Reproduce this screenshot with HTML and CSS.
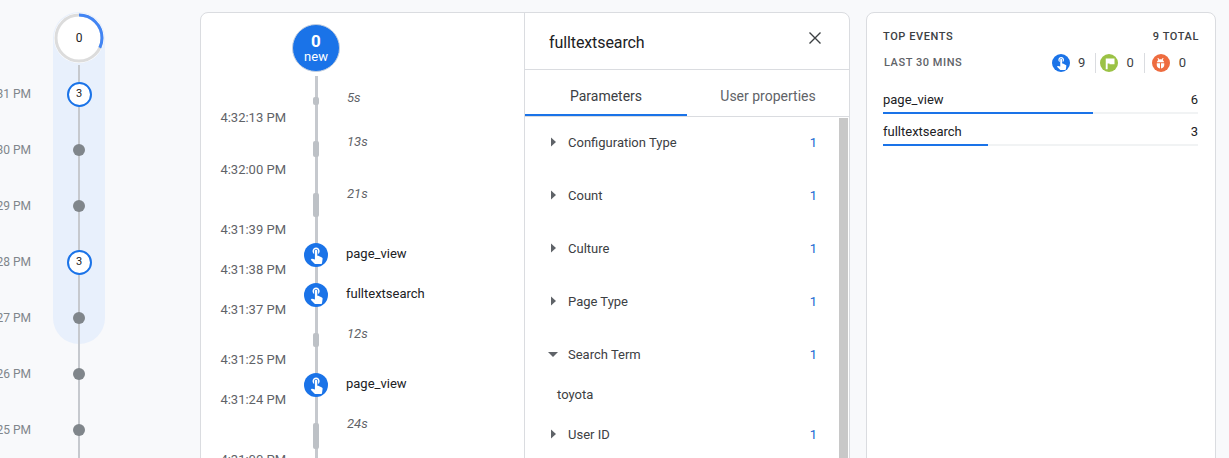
FILE: index.html
```html
<!DOCTYPE html>
<html lang="en">
<head>
    <meta charset="UTF-8">
    <meta name="viewport" content="width=device-width, initial-scale=1.0">
    <title>DebugView</title>
    <link rel="stylesheet" href="styles.css">
</head>
<body>
    <svg class="defs" width="0" height="0">
        <symbol id="touch" viewBox="0 0 24 24"><path d="M9 11.24V7.5C9 6.12 10.12 5 11.5 5S14 6.12 14 7.5v3.74c1.21-.81 2-2.18 2-3.74C16 5.01 13.99 3 11.5 3S7 5.01 7 7.5c0 1.56.79 2.93 2 3.74zm9.84 4.63l-4.54-2.26c-.17-.07-.35-.11-.54-.11H13v-6c0-.83-.67-1.5-1.5-1.5S10 6.67 10 7.5v10.74l-3.43-.72c-.08-.01-.15-.03-.24-.03-.31 0-.59.13-.79.33l-.79.8 4.94 4.94c.27.27.65.44 1.06.44h6.79c.75 0 1.33-.55 1.44-1.28l.75-5.27c.01-.07.02-.14.02-.2 0-.62-.38-1.16-.91-1.38z"/></symbol>
        <symbol id="flag" viewBox="0 0 24 24"><path d="M6 4h14v9h-8v-1h-3v9H6z"/></symbol>
        <symbol id="bug" viewBox="0 0 24 24"><path d="M7 3.5L8.4 3l1.9 2.400c1.100-.4 2.300-.4 3.400 0L15.600 3l1.400.5-1.500 3c1.200.8 2 1.900 2.300 3.500H6.200c.3-1.600 1.100-2.700 2.300-3.500zM6 11.500h5.200V20C8 19.600 6 17.500 6 14.500zM12.800 11.500H18v3c0 3-2 5.100-5.200 5.500z"/></symbol>
        <symbol id="arrow-right" viewBox="0 0 10 10"><path d="M3 .5L8 5 3 9.500z"/></symbol>
        <symbol id="arrow-down" viewBox="0 0 10 10"><path d="M0 3h10L5 8z"/></symbol>
    </svg>

    <div class="page">
        <div class="minutes">
            <div class="minutes-band"></div>
            <div class="minutes-rail"></div>
            <div class="ring">
                <svg class="ring-arc" viewBox="0 0 50 50">
                    <circle class="ring-track" cx="25" cy="25" r="23"/>
                    <circle class="ring-progress" cx="25" cy="25" r="23" pathLength="100" stroke-dasharray="32 68"/>
                </svg>
                <span>0</span>
            </div>
            <div class="minute"><span class="minute-time">4:31 PM</span><span class="minute-mark"><span class="badge">3</span></span></div>
            <div class="minute"><span class="minute-time">4:30 PM</span><span class="minute-mark"><span class="dot"></span></span></div>
            <div class="minute"><span class="minute-time">4:29 PM</span><span class="minute-mark"><span class="dot"></span></span></div>
            <div class="minute"><span class="minute-time">4:28 PM</span><span class="minute-mark"><span class="badge">3</span></span></div>
            <div class="minute"><span class="minute-time">4:27 PM</span><span class="minute-mark"><span class="dot"></span></span></div>
            <div class="minute"><span class="minute-time">4:26 PM</span><span class="minute-mark"><span class="dot"></span></span></div>
            <div class="minute"><span class="minute-time">4:25 PM</span><span class="minute-mark"><span class="dot"></span></span></div>
        </div>

        <div class="card stream">
            <div class="timeline">
                <div class="new-count"><b>0</b><span>new</span></div>
                <div class="events">
                    <div class="event gap-row row-44">
                        <span class="event-time">4:32:13 PM</span>
                        <span class="event-mark"><i class="pill pill-5"></i></span>
                        <span class="gap-label">5s</span>
                    </div>
                    <div class="event gap-row row-52">
                        <span class="event-time">4:32:00 PM</span>
                        <span class="event-mark"><i class="pill pill-13"></i></span>
                        <span class="gap-label">13s</span>
                    </div>
                    <div class="event gap-row row-60">
                        <span class="event-time">4:31:39 PM</span>
                        <span class="event-mark"><i class="pill pill-21"></i></span>
                        <span class="gap-label">21s</span>
                    </div>
                    <div class="event row-40">
                        <span class="event-time">4:31:38 PM</span>
                        <span class="event-mark"><span class="event-icon"><svg><use href="#touch"/></svg></span></span>
                        <span class="event-name">page_view</span>
                    </div>
                    <div class="event row-40">
                        <span class="event-time">4:31:37 PM</span>
                        <span class="event-mark"><span class="event-icon"><svg><use href="#touch"/></svg></span></span>
                        <span class="event-name">fulltextsearch</span>
                    </div>
                    <div class="event gap-row row-50">
                        <span class="event-time">4:31:25 PM</span>
                        <span class="event-mark"><i class="pill pill-12"></i></span>
                        <span class="gap-label">12s</span>
                    </div>
                    <div class="event row-40">
                        <span class="event-time">4:31:24 PM</span>
                        <span class="event-mark"><span class="event-icon"><svg><use href="#touch"/></svg></span></span>
                        <span class="event-name">page_view</span>
                    </div>
                    <div class="event gap-row row-60">
                        <span class="event-time">4:31:00 PM</span>
                        <span class="event-mark"><i class="pill pill-24"></i></span>
                        <span class="gap-label">24s</span>
                    </div>
                </div>
            </div>

            <div class="details">
                <div class="details-head">
                    <span class="details-title">fulltextsearch</span>
                    <svg class="close" viewBox="0 0 14 14"><path d="M1.500 1.500l11 11M12.500 1.500l-11 11"/></svg>
                </div>
                <div class="tabs">
                    <div class="tab active">Parameters</div>
                    <div class="tab">User properties</div>
                </div>
                <div class="params-wrap">
                    <div class="params">
                        <div class="param"><svg class="caret"><use href="#arrow-right"/></svg><span class="param-name">Configuration Type</span><span class="param-count">1</span></div>
                        <div class="param"><svg class="caret"><use href="#arrow-right"/></svg><span class="param-name">Count</span><span class="param-count">1</span></div>
                        <div class="param"><svg class="caret"><use href="#arrow-right"/></svg><span class="param-name">Culture</span><span class="param-count">1</span></div>
                        <div class="param"><svg class="caret"><use href="#arrow-right"/></svg><span class="param-name">Page Type</span><span class="param-count">1</span></div>
                        <div class="param open"><svg class="caret"><use href="#arrow-down"/></svg><span class="param-name">Search Term</span><span class="param-count">1</span></div>
                        <div class="param-value">toyota</div>
                        <div class="param"><svg class="caret"><use href="#arrow-right"/></svg><span class="param-name">User ID</span><span class="param-count">1</span></div>
                    </div>
                    <div class="scroll-thumb"></div>
                </div>
            </div>
        </div>

        <div class="card top-events">
            <div class="top-head">
                <span>TOP EVENTS</span>
                <span>9 TOTAL</span>
            </div>
            <div class="top-sub">
                <span class="top-range">LAST 30 MINS</span>
                <div class="tallies">
                    <div class="tally"><span class="tally-icon blue"><svg><use href="#touch"/></svg></span><span>9</span></div>
                    <div class="tally"><span class="tally-icon green"><svg><use href="#flag"/></svg></span><span>0</span></div>
                    <div class="tally"><span class="tally-icon orange"><svg><use href="#bug"/></svg></span><span>0</span></div>
                </div>
            </div>
            <div class="bar-row">
                <div class="bar-text"><span>page_view</span><span>6</span></div>
                <div class="bar-track"><div class="bar-fill" style="width: 66.667%"></div></div>
            </div>
            <div class="bar-row">
                <div class="bar-text"><span>fulltextsearch</span><span>3</span></div>
                <div class="bar-track"><div class="bar-fill" style="width: 33.333%"></div></div>
            </div>
        </div>
    </div>
</body>
</html>
```

FILE: styles.css
```css
html, body {
    height: 100%;
    margin: 0;
    overflow: hidden;
}
body {
    font-family: Roboto, "Liberation Sans", sans-serif;
    font-size: 13px;
    line-height: 16px;
    background-color: #f8f9fb;
    color: #202124;
}
.defs {
    position: absolute;
}
.page {
    display: flex;
    align-items: flex-start;
    gap: 16px;
    height: 458px;
    overflow: hidden;
}

/* minutes column */
.minutes {
    position: relative;
    flex: none;
    width: 184px;
    height: 640px;
    padding-top: 13px;
    box-sizing: border-box;
}
.minutes-band {
    position: absolute;
    left: 53px;
    top: 12px;
    width: 52px;
    height: 332px;
    border-radius: 26px;
    background-color: #e8f0fc;
}
.minutes-rail {
    position: absolute;
    left: 78px;
    top: 65px;
    bottom: 0;
    width: 2px;
    background-color: #c6c9ce;
}
.ring {
    position: relative;
    width: 50px;
    height: 50px;
    margin: 0 0 3px 54px;
    display: flex;
    align-items: center;
    justify-content: center;
    border-radius: 50%;
    background-color: #fff;
    font-size: 12px;
}
.ring-arc {
    position: absolute;
    inset: 0;
    transform: rotate(-90deg);
}
.ring-track,
.ring-progress {
    fill: none;
    stroke-width: 3px;
}
.ring-track {
    stroke: #dcdcdc;
}
.ring-progress {
    stroke: #4285f4;
}
.minute {
    display: flex;
    align-items: center;
    height: 56px;
}
.minute-time {
    display: flex;
    justify-content: flex-end;
    flex: none;
    width: 31px;
    overflow: hidden;
    white-space: nowrap;
    font-size: 12px;
    color: #80868b;
}
.minute-mark {
    display: flex;
    justify-content: center;
    flex: none;
    width: 96px;
}
.dot {
    position: relative;
    width: 12px;
    height: 12px;
    border-radius: 50%;
    background-color: #80868b;
}
.badge {
    position: relative;
    display: flex;
    align-items: center;
    justify-content: center;
    width: 25px;
    height: 25px;
    box-sizing: border-box;
    border: 2px solid #1a73e8;
    border-radius: 50%;
    background-color: #fff;
    font-size: 11px;
}

/* cards */
.card {
    flex: none;
    box-sizing: border-box;
    height: 640px;
    margin-top: 12px;
    border: 1px solid #dadce0;
    border-radius: 8px;
    background-color: #fff;
}
.stream {
    display: flex;
    width: 650px;
}

/* event timeline */
.timeline {
    flex: none;
    box-sizing: border-box;
    width: 324px;
    padding-top: 11px;
    border-right: 1px solid #dadce0;
}
.new-count {
    display: flex;
    flex-direction: column;
    align-items: center;
    justify-content: center;
    box-sizing: border-box;
    width: 48px;
    height: 48px;
    margin: 0 0 10px 91px;
    border: 1px solid #c3cfe0;
    border-radius: 50%;
    background-color: #1a73e8;
    color: #fff;
    font-size: 13px;
    line-height: 14px;
}
.new-count b {
    font-size: 17px;
    font-weight: 700;
    line-height: 18px;
}
.events {
    position: relative;
}
.events::before {
    content: "";
    position: absolute;
    left: 114px;
    top: -6px;
    bottom: 0;
    width: 3px;
    background-color: #c6c9ce;
}
.event {
    position: relative;
    display: grid;
    grid-template-columns: 85px 24px 1fr;
    column-gap: 18px;
}
.row-40 { height: 40px; }
.row-44 { height: 44px; }
.row-50 { height: 50px; }
.row-52 { height: 52px; }
.row-60 { height: 60px; }
.event-time {
    grid-column: 1;
    align-self: end;
    text-align: right;
    color: #5f6368;
}
.event-mark {
    grid-column: 2;
    display: flex;
    justify-content: center;
    padding-top: 5px;
}
.gap-row .event-mark {
    padding-top: 15px;
}
.event-name,
.gap-label {
    grid-column: 3;
    padding-top: 8px;
}
.gap-label {
    font-style: italic;
    color: #5f6368;
    margin-left: 1px;
}
.pill {
    display: block;
    width: 6px;
    border-radius: 2px;
    background-color: #bdc1c6;
}
.pill-5 { height: 8px; }
.pill-12 { height: 14px; }
.pill-13 { height: 16px; }
.pill-21 { height: 24px; }
.pill-24 { height: 26px; }
.event-icon {
    display: flex;
    align-items: center;
    justify-content: center;
    width: 24px;
    height: 24px;
    border-radius: 50%;
    background-color: #1a73e8;
}
.event-icon svg {
    width: 19px;
    height: 19px;
    margin-bottom: 2px;
    fill: #fff;
}

/* event details */
.details {
    flex: 1;
    min-width: 0;
}
.details-head {
    display: flex;
    align-items: center;
    justify-content: space-between;
    height: 56px;
    padding: 0 27px 0 24px;
    border-bottom: 1px solid #dadce0;
}
.details-title {
    font-size: 16px;
    letter-spacing: -0.1px;
    margin-top: 4px;
}
.close {
    width: 14px;
    height: 14px;
    margin-top: -6px;
    fill: none;
    stroke: #3c4043;
    stroke-width: 1.400;
}
.tabs {
    display: flex;
    border-bottom: 1px solid #dadce0;
}
.tab {
    flex: 1;
    box-sizing: border-box;
    height: 46px;
    padding-top: 18px;
    text-align: center;
    font-size: 14px;
    color: #5f6368;
}
.tab.active {
    border-bottom: 2px solid #1a73e8;
    color: #3c4043;
}
.params-wrap {
    display: flex;
    padding-right: 1px;
}
.params {
    flex: 1;
    padding-right: 22px;
}
.param {
    display: flex;
    box-sizing: border-box;
    height: 53px;
    padding: 18px 0 0 23px;
    color: #3c4043;
}
.param.open {
    height: 50px;
}
.caret {
    flex: none;
    width: 10px;
    height: 10px;
    margin: 2px 10px 0 0;
    fill: #5f6368;
}
.param-name {
    flex: 1;
}
.param-count {
    color: #1967d2;
}
.param-value {
    box-sizing: border-box;
    height: 30px;
    padding: 8px 0 0 32px;
    color: #3c4043;
}
.scroll-thumb {
    flex: none;
    width: 9px;
    height: 500px;
    margin-top: 1px;
    background-color: #c8c8c8;
}

/* top events */
.top-events {
    width: 350px;
    padding: 16px 17px 0 16px;
}
.top-head {
    display: flex;
    justify-content: space-between;
    margin-right: -1px;
    font-size: 11px;
    font-weight: 500;
    letter-spacing: 0.6px;
    color: #3c4043;
}
.top-sub {
    display: flex;
    align-items: center;
    justify-content: space-between;
    height: 20px;
    margin-top: 8px;
    padding-left: 1px;
}
.top-range {
    font-size: 11px;
    font-weight: 500;
    letter-spacing: 0.55px;
    color: #5f6368;
}
.tallies {
    display: flex;
    margin-right: 12px;
}
.tally {
    display: flex;
    align-items: center;
    gap: 8px;
    height: 20px;
    color: #3c4043;
}
.tally + .tally {
    margin-left: 10px;
    padding-left: 4px;
    border-left: 1px solid #dadce0;
}
.tally:last-child {
    gap: 9px;
    margin-left: 10px;
    padding-left: 7px;
}
.tally-icon {
    display: flex;
    align-items: center;
    justify-content: center;
    width: 18px;
    height: 18px;
    border-radius: 50%;
}
.tally-icon svg {
    width: 15px;
    height: 15px;
    fill: #fff;
}
.blue svg {
    margin-bottom: 2px;
}
.blue { background-color: #1a73e8; }
.green { background-color: #9bc245; }
.orange { background-color: #ee6c3f; }
.bar-row {
    padding-top: 6px;
}
.top-sub + .bar-row {
    margin-top: 13px;
}
.bar-row + .bar-row {
    margin-top: 4px;
}
.bar-text {
    display: flex;
    justify-content: space-between;
    padding-bottom: 4px;
}
.bar-track {
    height: 2px;
    background-color: #f1f3f4;
}
.bar-fill {
    height: 2px;
    background-color: #1a73e8;
}
```
